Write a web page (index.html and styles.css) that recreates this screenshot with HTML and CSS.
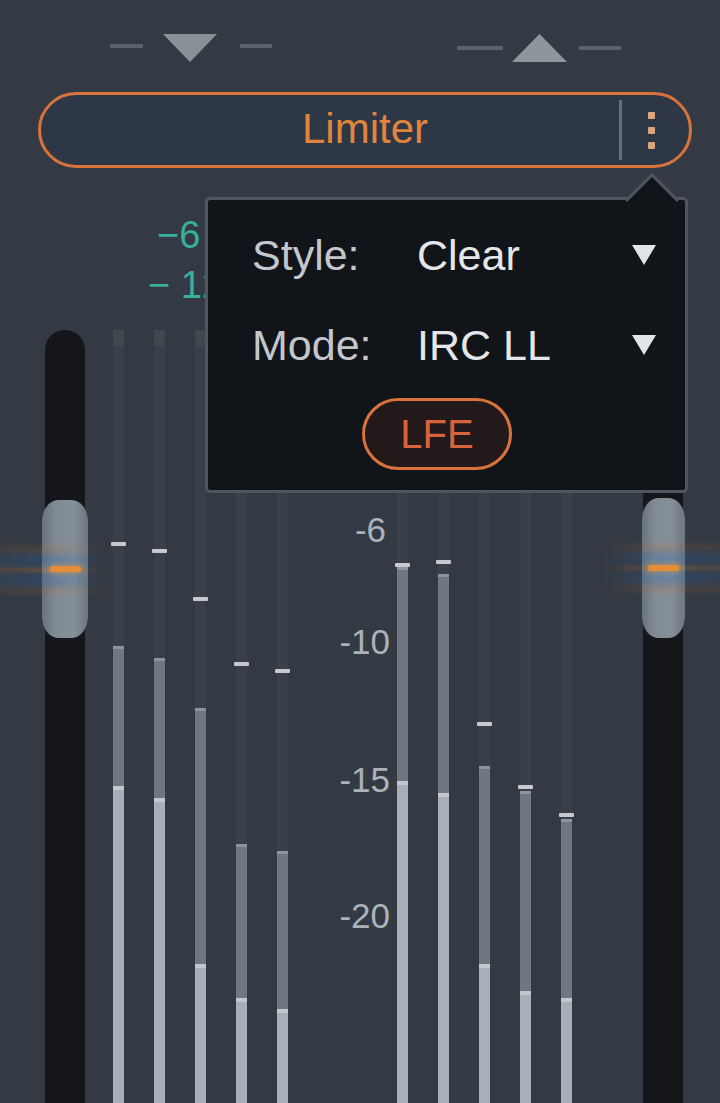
FILE: index.html
```html
<!DOCTYPE html>
<html>
<head>
<meta charset="utf-8">
<link rel="stylesheet" href="styles.css">
</head>
<body>
<div class="app">
  <div class="toprow">
    <div class="ind ind-down">
      <span class="dash dd1"></span>
      <svg class="tri" width="56" height="30" viewBox="0 0 56 30"><polygon points="1,1 55,1 28,29"/></svg>
      <span class="dash dd2"></span>
    </div>
    <div class="ind ind-up">
      <span class="dash du1"></span>
      <svg class="tri" width="57" height="30" viewBox="0 0 57 30"><polygon points="28.5,1 56,29 1,29"/></svg>
      <span class="dash du2"></span>
    </div>
  </div>

  <div class="preset">
    <span class="preset-name">Limiter</span>
    <div class="preset-tools">
      <span class="sep"></span>
      <span class="kebab"><i></i><i></i><i></i></span>
    </div>
  </div>

  <div class="readouts">
    <div class="ro ro1">−6</div>
    <div class="ro ro2">− 12</div>
  </div>

  <div class="meters">
    <div class="fader fader-left">
      <div class="handle handle-left"><span class="mark"></span></div>
    </div>

    <div class="bars bars-left">
      <div class="bar"><span class="sp" style="height:212px"></span><span class="tick"></span><span class="sp" style="height:100px"></span><span class="med" style="height:140px"></span><span class="lite"></span></div>
      <div class="bar"><span class="sp" style="height:219px"></span><span class="tick"></span><span class="sp" style="height:105px"></span><span class="med" style="height:140px"></span><span class="lite"></span></div>
      <div class="bar"><span class="sp" style="height:267px"></span><span class="tick"></span><span class="sp" style="height:107px"></span><span class="med" style="height:256px"></span><span class="lite"></span></div>
      <div class="bar"><span class="sp" style="height:332px"></span><span class="tick"></span><span class="sp" style="height:178px"></span><span class="med" style="height:154px"></span><span class="lite"></span></div>
      <div class="bar"><span class="sp" style="height:339px"></span><span class="tick"></span><span class="sp" style="height:178px"></span><span class="med" style="height:158px"></span><span class="lite"></span></div>
    </div>

    <div class="scale">
      <span class="lbl l6">-6</span>
      <span class="lbl l10">-10</span>
      <span class="lbl l15">-15</span>
      <span class="lbl l20">-20</span>
    </div>

    <div class="bars bars-right">
      <div class="bar"><span class="sp" style="height:233px"></span><span class="tick"></span><span class="sp" style="height:0px"></span><span class="med" style="height:214px"></span><span class="lite"></span></div>
      <div class="bar"><span class="sp" style="height:230px"></span><span class="tick"></span><span class="sp" style="height:10px"></span><span class="med" style="height:219px"></span><span class="lite"></span></div>
      <div class="bar"><span class="sp" style="height:392px"></span><span class="tick"></span><span class="sp" style="height:40px"></span><span class="med" style="height:198px"></span><span class="lite"></span></div>
      <div class="bar"><span class="sp" style="height:455px"></span><span class="tick"></span><span class="sp" style="height:2px"></span><span class="med" style="height:200px"></span><span class="lite"></span></div>
      <div class="bar"><span class="sp" style="height:483px"></span><span class="tick"></span><span class="sp" style="height:2px"></span><span class="med" style="height:179px"></span><span class="lite"></span></div>
    </div>

    <div class="fader fader-right">
      <div class="handle handle-right"><span class="mark"></span></div>
    </div>
  </div>

  <div class="popup">
    <div class="prow">
      <span class="plabel">Style:</span>
      <span class="pval">Clear</span>
      <svg class="parrow" width="26" height="22" viewBox="0 0 26 22"><polygon points="1,1 25,1 13,21"/></svg>
    </div>
    <div class="prow">
      <span class="plabel">Mode:</span>
      <span class="pval">IRC LL</span>
      <svg class="parrow" width="26" height="22" viewBox="0 0 26 22"><polygon points="1,1 25,1 13,21"/></svg>
    </div>
    <div class="lfe">LFE</div>
  </div>
  <svg class="popup-arrow" width="54" height="30" viewBox="0 0 54 30">
    <polygon class="pa-fill" points="1,29 27,2 53,29"/>
    <polyline class="pa-line" points="1,28 27,2 53,28"/>
  </svg>
</div>
</body>
</html>
```

FILE: styles.css
```css
html, body {
  margin: 0;
  padding: 0;
  background: #343a43;
}

.app {
  position: relative;
  width: 720px;
  height: 1103px;
  overflow: hidden;
  background: #343a43;
  font-family: "Liberation Sans", Arial, sans-serif;
}

/* top indicators */
.toprow {
  height: 92px;
  box-sizing: border-box;
  padding: 33px 0 0 110px;
  display: flex;
  align-items: flex-start;
}
.ind {
  display: flex;
  align-items: center;
  height: 30px;
}
.ind-down { gap: 19px; }
.ind-up { gap: 8px; margin-left: 185px; }
.dash {
  display: block;
  height: 4px;
  background: #5b626b;
  border-radius: 1px;
}
.dd1 { width: 33px; margin-top: -4px; }
.dd2 { width: 32px; margin-left: 3px; margin-top: -4px; }
.du1 { width: 46px; }
.du2 { width: 42px; margin-left: 3px; }
.tri { display: block; }
.ind-down .tri polygon { fill: #8a9097; }
.ind-up .tri polygon { fill: #8e969d; }

/* preset pill */
.preset {
  margin-left: 38px;
  width: 654px;
  height: 76px;
  box-sizing: border-box;
  border: 3px solid #d8743b;
  border-radius: 38px;
  background: #2e3746;
  display: grid;
  grid-template-columns: 1fr;
  grid-template-rows: 1fr;
}
.preset-name {
  grid-area: 1 / 1;
  justify-self: center;
  align-self: center;
  color: #e0853e;
  font-size: 42px;
  line-height: 1;
  margin-top: -2px;
}
.preset-tools {
  grid-area: 1 / 1;
  justify-self: end;
  display: flex;
  align-items: center;
  padding: 5px 34px 5px 0;
}
.sep {
  align-self: stretch;
  width: 3px;
  background: #5a6f88;
}
.kebab {
  display: flex;
  flex-direction: column;
  gap: 8px;
  margin-left: 26px;
}
.kebab i {
  display: block;
  width: 7px;
  height: 7px;
  background: #dba67c;
  border-radius: 1px;
}

/* teal readouts behind popup */
.readouts {
  height: 162px;
  box-sizing: border-box;
  padding-top: 42px;
  color: #38ae9b;
  font-size: 38px;
  line-height: 50px;
  white-space: nowrap;
}
.ro1 { padding-left: 157px; }
.ro2 { padding-left: 148px; }

/* meters */
.meters {
  height: 773px;
  display: flex;
  align-items: stretch;
}
.fader {
  width: 40px;
  background: #141619;
  border-radius: 20px 20px 0 0;
  display: flex;
  flex-direction: column;
}
.fader-left { margin-left: 45px; }
.fader-right { margin-left: 71px; }
.handle {
  position: relative;
  height: 138px;
  border-radius: 16px / 22px;
  background: linear-gradient(90deg, #69737d 0%, #818b94 30%, #858f98 70%, #6c7680 100%);
  display: flex;
  align-items: center;
  justify-content: center;
}
.handle-left {
  margin: 170px -3px 0 -3px;
}
.handle-right {
  margin: 168px -2px 0 -1px;
  height: 140px;
}
.handle::before {
  content: "";
  position: absolute;
  top: 42px;
  height: 56px;
  background: linear-gradient(180deg,
    rgba(190,105,40,0) 0%,
    rgba(190,105,40,0.18) 12%,
    rgba(40,100,170,0.32) 30%,
    rgba(60,110,170,0.2) 42%,
    rgba(225,135,50,0.28) 50%,
    rgba(60,110,170,0.2) 58%,
    rgba(40,100,170,0.32) 70%,
    rgba(190,105,40,0.18) 88%,
    rgba(190,105,40,0) 100%);
}
.handle-left::before {
  left: -42px;
  right: -20px;
  -webkit-mask-image: linear-gradient(90deg, rgba(0,0,0,.6) 0%, #000 50%, transparent 100%);
  mask-image: linear-gradient(90deg, rgba(0,0,0,.6) 0%, #000 50%, transparent 100%);
}
.handle-right::before {
  left: -40px;
  right: -35px;
  -webkit-mask-image: linear-gradient(270deg, rgba(0,0,0,.6) 0%, #000 50%, transparent 100%);
  mask-image: linear-gradient(270deg, rgba(0,0,0,.6) 0%, #000 50%, transparent 100%);
}
.mark {
  position: relative;
  display: block;
  width: 31px;
  height: 6px;
  background: #e48d38;
  border-radius: 2px;
  box-shadow: 0 0 5px rgba(228,141,56,0.6);
}

.bars {
  display: flex;
  gap: 30px;
}
.bars-left { margin-left: 28px; }
.bar {
  width: 11px;
  display: flex;
  flex-direction: column;
  background: linear-gradient(180deg, #40474f 0px, #40474f 16px, #394049 16px);
}
.bar .sp { display: block; flex: none; }
.bar .tick {
  display: block;
  flex: none;
  height: 4px;
  margin: 0 -2px;
  background: #c4cad0;
  border-radius: 1px;
}
.bar .med {
  display: block;
  flex: none;
  background: linear-gradient(180deg, #8c949d 0px, #8c949d 3px, #6e7782 3px);
}
.bar .lite {
  display: block;
  flex: 1;
  background: linear-gradient(180deg, #c2c8ce 0px, #c2c8ce 4px, #a7afb8 4px);
}

.scale {
  width: 109px;
  box-sizing: border-box;
  padding-right: 7px;
  display: flex;
  flex-direction: column;
  align-items: flex-end;
}
.lbl {
  display: block;
  color: #abb2b9;
  font-size: 35px;
  line-height: 40px;
}
.l6 { margin-top: 180px; margin-right: 4px; }
.l10 { margin-top: 72px; }
.l15 { margin-top: 98px; }
.l20 { margin-top: 96px; }

/* popup */
.popup {
  position: absolute;
  left: 205px;
  top: 197px;
  width: 483px;
  height: 296px;
  box-sizing: border-box;
  border: 3px solid #4f565f;
  border-radius: 5px;
  background: #111418;
  padding: 10px 28px 0 44px;
}
.prow {
  height: 90px;
  display: flex;
  align-items: center;
  font-size: 43px;
  line-height: 1;
}
.plabel {
  width: 165px;
  color: #c3c7cc;
}
.pval {
  flex: 1;
  color: #e4e6e8;
}
.parrow { display: block; }
.parrow polygon { fill: #e2e5e8; }
.lfe {
  margin: 8px 0 0 110px;
  width: 150px;
  height: 72px;
  box-sizing: border-box;
  border: 3px solid #d7733b;
  border-radius: 36px;
  background: #23191b;
  color: #d9633c;
  font-size: 40px;
  line-height: 66px;
  text-align: center;
}
.popup-arrow {
  position: absolute;
  left: 625px;
  top: 173px;
}
.pa-fill { fill: #111418; }
.pa-line { fill: none; stroke: #4f565f; stroke-width: 3; }
```
